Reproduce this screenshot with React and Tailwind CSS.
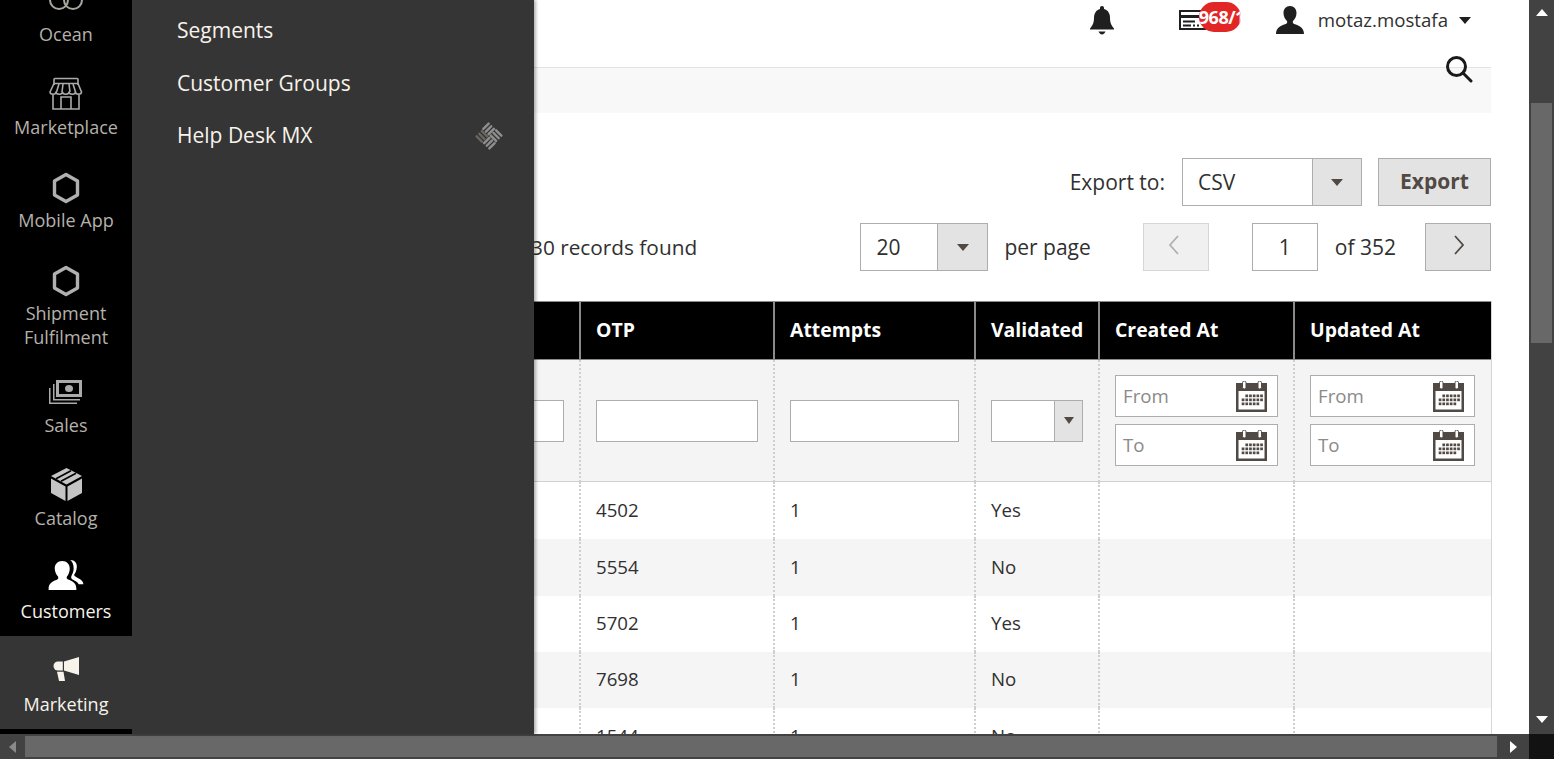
import React from "react";

const Hexagon = () => (
  <svg width="28" height="32" viewBox="0 0 28 32" fill="none" stroke="#b0b0b0" strokeWidth="3.4" className="mt-[4px]">
    <path d="M14 2.500 25.500 9v14L14 29.500 2.500 23V9z" strokeLinejoin="round" />
  </svg>
);

const OceanIcon = () => (
  <svg width="34" height="26" viewBox="0 0 34 26" fill="none" stroke="#a8a8a0" strokeWidth="2" className="mb-[2px]">
    <circle cx="10" cy="14" r="9" />
    <circle cx="24" cy="14" r="9" />
  </svg>
);

const StoreIcon = () => (
  <svg width="34" height="33" viewBox="0 0 34 33" fill="none" stroke="#aaaaaa" strokeWidth="1.6">
    <path d="M5 8V2.500a1 1 0 0 1 1-1h22a1 1 0 0 1 1 1V8" />
    <path d="M5 6.500h24l3.500 8.500c0 3-6 3-6 0 0 3-6.500 3-6.500 0 0 3-6.500 3-6.500 0 0 3-6.500 3-6.500 0 0 3-6 3-6 0z" strokeLinejoin="round" />
    <path d="M10 7 7.500 15M14 7l-1 8M20 7l1 8M24 7l2.500 8" />
    <path d="M4 18v14h26V18M12 32V20h10v12" />
  </svg>
);

const SalesIcon = () => (
  <svg width="34" height="24" viewBox="0 0 34 24" fill="#aaaaaa" className="mt-[2px]">
    <path fillRule="evenodd" d="M7 0h26v17H7zM10 3v11h20V3z" />
    <ellipse cx="20" cy="8.500" rx="4" ry="3.500" />
    <path d="M4 4h1.500v15H31v1.500H4z" />
    <path d="M0 8h1.500v14.500H28V24H0z" />
  </svg>
);

const BoxIcon = () => (
  <svg width="31" height="33" viewBox="0 0 31 33" fill="#c4c4c4">
    <path d="M0 10.500 14.500 18.500V33L0 25zM31 10.500 16.500 18.500V33L31 25z" />
    <path d="M15.500 0 31 8 15.500 16.500 0 8z" />
    <path d="M5 10.700 20 2.700M10 13.300 25 5.300" stroke="#000" strokeWidth="1.600" fill="none" />
  </svg>
);

const PeopleIcon = () => (
  <svg width="36" height="31" viewBox="0 0 37 33" fill="#ffffff" className="mb-[6px]">
    <path d="M23 1c5 0 7.500 3.500 7 8-.4 3.500-1.500 6-3 8 1 2 4 3 6.500 4.500 2 1.200 3.500 3 3.500 5.500h-5c-1-2.500-4-4-6.500-5.200-1.500-.8-2-2.300-1-4.300 2-3.500 2.500-6.500 2-9.500C26.200 5 25 2.700 23 1z" />
    <path d="M14.500 2c5 0 8 3.500 8 8 0 3.500-1.300 6.500-3 8.500-.8 1.500 0 2.700 2 3.500 4 1.500 8 3.500 8 9.500V33H0v-1.500C0 26 4 24 8 22.300c2-.8 2.800-2 2-3.800-1.800-2-3.500-5-3.500-8.500 0-4.500 3-8 8-8z" />
  </svg>
);

const MegaphoneIcon = () => (
  <svg width="26" height="24" viewBox="0 0 26 24" fill="#f7f3eb" className="mb-[2px]">
    <path d="M11 4.500 26 0v18l-15-4.500z" />
    <path d="M9.800 4.500H5a4.500 4.500 0 0 0 0 9h4.800z" />
    <path d="M4 14.800h6.500L12 24H6z" />
  </svg>
);

const NavItem = ({ label, children, active, white, tall }) => (
  <div
    className={`flex flex-col items-center pt-[16px] text-[18px] leading-[24px] ${tall ? "h-[112px]" : "h-[93px]"} ${
      active ? "bg-[#353535] text-[#f7f3eb]" : white ? "text-[#f7f3eb]" : "text-[#b5b1aa]"
    }`}
  >
    <div className="flex h-[36px] items-center justify-center">{children}</div>
    <div className="mt-[4px] text-center">{label}</div>
  </div>
);

const Sidebar = () => (
  <div className="flex h-full w-[132px] shrink-0 flex-col overflow-hidden bg-black">
    <div className="-mt-[34px]">
      <NavItem label="Ocean"><OceanIcon /></NavItem>
      <NavItem label="Marketplace"><StoreIcon /></NavItem>
      <NavItem label="Mobile App"><Hexagon /></NavItem>
      <NavItem tall label={<>Shipment<br />Fulfilment</>}><Hexagon /></NavItem>
      <NavItem label="Sales"><SalesIcon /></NavItem>
      <NavItem label="Catalog"><BoxIcon /></NavItem>
      <NavItem white label="Customers"><PeopleIcon /></NavItem>
      <NavItem active label="Marketing"><MegaphoneIcon /></NavItem>
    </div>
  </div>
);

const HelpDeskIcon = () => (
  <svg width="30" height="30" viewBox="-15 -15 30 30" stroke="#8f8f8f" strokeWidth="2.400" strokeLinecap="round">
    <g transform="rotate(45)">
      <path d="M-9 -8.500V-1M-5.300 -8.500V-1M-1.600 -8.500V-1" />
      <path d="M1 -9H8.500M1 -5.300H8.500M1 -1.600H8.500" />
      <path d="M1.600 1V8.500M5.300 1V8.500M9 1V8.500" />
      <path d="M-8.500 1.600H-1M-8.500 5.300H-1M-8.500 9H-1" stroke="#6b6560" />
    </g>
  </svg>
);

const SubMenu = () => (
  <div className="relative z-10 h-full w-[402px] shrink-0 bg-[#353535] pl-[45px] pr-[30px] pt-[4px] text-[21px] text-[#f7f3eb] shadow-[2px_0_3px_rgba(0,0,0,0.3)]">
    <div className="flex h-[53px] items-center">Segments</div>
    <div className="flex h-[53px] items-center">Customer Groups</div>
    <div className="flex h-[52px] items-center justify-between">
      <span>Help Desk MX</span>
      <HelpDeskIcon />
    </div>
  </div>
);

const BellIcon = () => (
  <svg width="26" height="30" viewBox="0 0 26 30" fill="#1f1f1f">
    <path d="M13 1c1.300 0 2 .8 2 2v1c4 1 6 4.500 6 9 0 5 1.500 7.500 4 10.500v1H1v-1C3.500 20.500 5 18 5 13c0-4.500 2-8 6-9V3c0-1.200.7-2 2-2z" />
    <path d="M9.500 26.500h7c-.5 1.500-2 3-3.500 3s-3-1.500-3.500-3z" />
  </svg>
);

const CardIcon = () => (
  <svg width="27" height="22" viewBox="0 0 27 22" fill="#1f1f1f">
    <path fillRule="evenodd" d="M0 1h27v20H0zM2 3v3h23V3zM2 9v10h23V9z" />
    <path d="M4 11.500h12v2H4zM4 15.500h8v2H4zM14 15.500h2v2h-2zM18 15.500h2v2h-2z" />
  </svg>
);

const UserIcon = () => (
  <svg width="28" height="28" viewBox="0 0 28 28" fill="#1f1f1f">
    <path d="M14 0c4 0 6.500 3 6.500 7 0 3.500-1.700 6.500-3.500 8-.6 1.500 0 2.500 2 3.300 4 1.600 9 3.200 9 9.700H0c0-6.500 5-8.100 9-9.700 2-.8 2.600-1.800 2-3.300-1.800-1.500-3.500-4.500-3.500-8C7.500 3 10 0 14 0z" />
  </svg>
);

const SearchIcon = () => (
  <svg width="28" height="28" viewBox="0 0 28 28" fill="none" stroke="#1a1a1a" strokeWidth="3">
    <circle cx="11.500" cy="11.500" r="9" />
    <path d="m18 18 8 8" strokeLinecap="round" />
  </svg>
);

// dots of the little calendar: [row, first column, last column]
const calendarDots = [
  [0, 1, 5],
  [1, 0, 5],
  [2, 0, 4],
];

const CalendarIcon = () => (
  <svg width="31" height="31" viewBox="0 0 31 31" className="shrink-0">
    <rect x="0" y="2" width="31" height="29" fill="#514943" />
    <rect x="2.500" y="10" width="26" height="18.500" fill="#ffffff" />
    <rect x="6.500" y="0" width="3.500" height="8" rx="1.700" fill="#ffffff" stroke="#514943" strokeWidth="1" />
    <rect x="22" y="0" width="3.500" height="8" rx="1.700" fill="#ffffff" stroke="#514943" strokeWidth="1" />
    {calendarDots.map(([row, from, to]) =>
      Array.from({ length: to - from + 1 }, (_, i) => (
        <rect key={`${row}-${i}`} x={5.700 + (from + i) * 3.700} y={13.500 + row * 4} width="2.700" height="2.700" fill="#514943" />
      ))
    )}
  </svg>
);

const Caret = () => <span className="h-0 w-0 border-x-[6px] border-t-[7px] border-x-transparent border-t-[#514943]" />;

const SelectBox = ({ value, className, arrow }) => (
  <div className={`flex h-full shrink-0 border border-[#adadad] bg-white ${className}`}>
    <div className="flex flex-1 items-center pl-[15px] pt-[1px]">{value}</div>
    <div className={`flex items-center justify-center border-l border-[#adadad] bg-[#e3e3e3] ${arrow}`}>
      <Caret />
    </div>
  </div>
);

const Chevron = ({ d, stroke, className }) => (
  <svg width="14" height="22" viewBox="0 0 14 22" fill="none" stroke={stroke} strokeWidth="1.800" className={className}>
    <path d={d} />
  </svg>
);

const DateInput = ({ label }) => (
  <div className="flex h-[42px] items-center justify-between border border-[#adadad] bg-white pl-[7px] pr-[10px] text-[#8a8a8a]">
    <span>{label}</span>
    <CalendarIcon />
  </div>
);

const Box = () => <div className="h-[42px] border border-[#adadad] bg-white" />;

const Th = ({ children }) => (
  <th className="border-y border-l-2 border-[#8a8a8a] pb-[2px] pl-[15px] text-left text-[19.400px] font-bold text-white first:border-l-0">
    {children}
  </th>
);

const Td = ({ children, className = "" }) => (
  <td className={`border-l-2 border-dotted border-[#cfcfcf] px-[15px] ${className}`}>{children}</td>
);

const FilterTd = ({ children }) => (
  <td className="border-b border-l-2 border-dotted border-[#cfcfcf] border-b-[#d1d1d1] px-[15px] last:pr-[16px] [border-bottom-style:solid]">
    {children}
  </td>
);

const rows = [
  ["4502", "Yes", "h-[57px]", "bg-white"],
  ["5554", "No", "h-[57px]", "bg-[#f5f5f5]"],
  ["5702", "Yes", "h-[56px]", "bg-white"],
  ["7698", "No", "h-[56px]", "bg-[#f5f5f5]"],
  ["1544", "No", "h-[57px]", "bg-white"],
];

const DataTable = () => (
  <table className="mt-[30px] w-[957px] table-fixed border-separate border-spacing-0 border-r border-[#d6d6d6]">
    <colgroup>
      <col className="w-[45px]" />
      <col className="w-[194px]" />
      <col className="w-[201px]" />
      <col className="w-[124px]" />
      <col className="w-[195px]" />
      <col className="w-[198px]" />
    </colgroup>
    <thead>
      <tr className="h-[59px] bg-black">
        <Th />
        <Th>OTP</Th>
        <Th>Attempts</Th>
        <Th>Validated</Th>
        <Th>Created At</Th>
        <Th>Updated At</Th>
      </tr>
    </thead>
    <tbody>
      <tr className="h-[122px] bg-[#f4f4f4]">
        <td className="border-b border-[#d1d1d1] pr-[15px]">
          <div className="-ml-[20px]"><Box /></div>
        </td>
        <FilterTd><Box /></FilterTd>
        <FilterTd><Box /></FilterTd>
        <FilterTd>
          <div className="flex h-[42px] w-[92px]">
            <SelectBox value="" className="w-full" arrow="w-[28px] [&>span]:border-x-[5px]" />
          </div>
        </FilterTd>
        <FilterTd>
          <div className="flex flex-col gap-[7px]"><DateInput label="From" /><DateInput label="To" /></div>
        </FilterTd>
        <FilterTd>
          <div className="flex flex-col gap-[7px]"><DateInput label="From" /><DateInput label="To" /></div>
        </FilterTd>
      </tr>
      {rows.map(([otp, validated, height, bg]) => (
        <tr key={otp} className={`${height} ${bg}`}>
          <td />
          <Td className="pb-[2px]">{otp}</Td>
          <Td className="pb-[2px]">1</Td>
          <Td className="pb-[2px]">{validated}</Td>
          <Td />
          <Td />
        </tr>
      ))}
    </tbody>
  </table>
);

const TopBar = () => (
  <div className="relative h-[68px] border-b border-[#e3e3e3] bg-white pr-[20px]">
    <div className="flex h-[40px] items-center justify-end">
      <BellIcon />
      <div className="relative ml-[64px] flex h-[40px] w-[62px] items-center">
        <CardIcon />
        <span className="absolute left-[20px] top-[2px] h-[30px] w-[42px] overflow-hidden whitespace-nowrap rounded-full bg-[#e22626] text-[18px] font-bold leading-[30px] tracking-[-0.5px] text-white">
          968/1
        </span>
      </div>
      <div className="ml-[35px]"><UserIcon /></div>
      <span className="ml-[14px] text-[#303030]">motaz.mostafa</span>
      <span className="ml-[11px] mt-[1px] h-0 w-0 border-x-[6px] border-t-[7px] border-x-transparent border-t-[#1f1f1f]" />
    </div>
    <div className="absolute right-[18px] top-[55px] z-10"><SearchIcon /></div>
  </div>
);

const Main = () => (
  <div className="h-full min-w-0 flex-1 overflow-hidden bg-white pr-[38px] text-[18.670px] text-[#303030]">
    <TopBar />
    <div className="h-[45px] bg-[#f8f8f8]" />

    <div className="mt-[45px] flex h-[48px] items-center justify-end text-[21px]">
      <span className="mr-[17px] pt-[1px]">Export to:</span>
      <SelectBox value="CSV" className="w-[180px]" arrow="w-[49px]" />
      <div className="ml-[16px] flex h-full w-[113px] items-center justify-center border border-[#adadad] bg-[#e3e3e3] font-bold text-[#514943]">
        Export
      </div>
    </div>

    <div className="mt-[17px] flex h-[48px] items-center text-[21px]">
      <span className="-ml-[3px] whitespace-nowrap pt-[1px] text-[20.800px]">30 records found</span>
      <SelectBox value="20" className="ml-auto w-[128px]" arrow="w-[50px]" />
      <span className="ml-[16px] pt-[1px]">per page</span>
      <div className="ml-[52px] flex h-full w-[66px] items-center justify-center border border-[#d6d6d6] bg-[#f0f0f0]">
        <Chevron d="M11 2 3 11l8 9" stroke="#b0b0b0" className="mb-[4px] mr-[4px]" />
      </div>
      <div className="ml-[43px] flex h-full w-[66px] items-center justify-center border border-[#adadad] bg-white pt-[1px]">1</div>
      <span className="ml-[17px] pt-[1px]">of 352</span>
      <div className="ml-[29px] flex h-full w-[66px] items-center justify-center border border-[#adadad] bg-[#e3e3e3]">
        <Chevron d="m3 2 8 9-8 9" stroke="#514943" className="mb-[4px] ml-[2px]" />
      </div>
    </div>

    <DataTable />
  </div>
);

const VScroll = () => (
  <div className="flex h-full w-[25px] shrink-0 flex-col items-center bg-[#424242]">
    <svg width="12" height="7" viewBox="0 0 12 7" fill="#ffffff" className="mt-[9px]"><path d="M6 0l6 7H0z" /></svg>
    <div className="mt-[87px] h-[240px] w-[21px] bg-[#686868]" />
    <svg width="12" height="7" viewBox="0 0 12 7" fill="#ffffff" className="mt-auto mb-[11px]"><path d="M6 7l6-7H0z" /></svg>
  </div>
);

const HScroll = () => (
  <div className="flex h-[25px] shrink-0">
    <div className="flex h-full flex-1 items-center bg-[#424242]">
      <div className="flex w-[25px] justify-center">
        <svg width="7" height="12" viewBox="0 0 7 12" fill="#8a8a8a"><path d="M0 6l7-6v12z" /></svg>
      </div>
      <div className="h-[21px] w-[1472px] bg-[#686868]" />
      <div className="flex flex-1 justify-center">
        <svg width="7" height="12" viewBox="0 0 7 12" fill="#ffffff"><path d="M7 6 0 0v12z" /></svg>
      </div>
    </div>
    <div className="h-full w-[25px] bg-[#121212]" />
  </div>
);

const App = () => {
  return (
    <div className="flex h-[759px] w-[1554px] flex-col overflow-hidden font-['Open_Sans',sans-serif]">
      <div className="flex h-[734px]">
        <Sidebar />
        <SubMenu />
        <Main />
        <VScroll />
      </div>
      <HScroll />
    </div>
  );
};

export default App;
